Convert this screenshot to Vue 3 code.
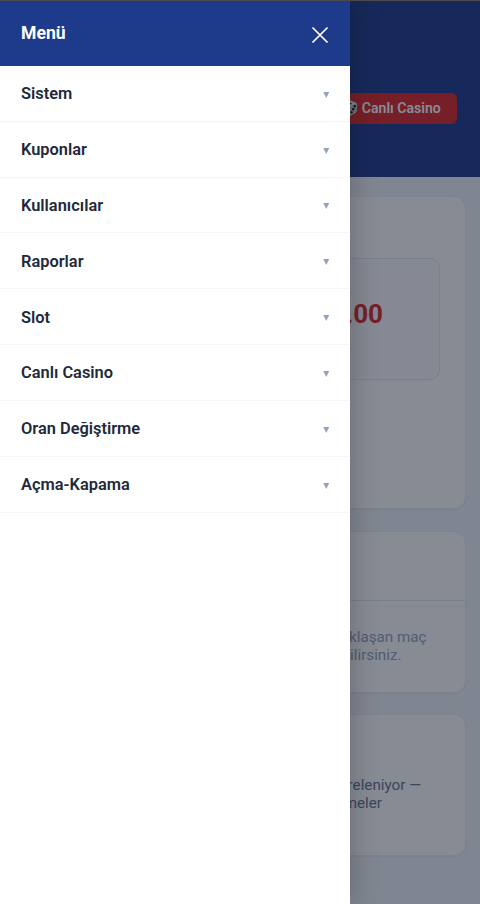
<script setup>
const items = ['Sistem', 'Kuponlar', 'Kullanıcılar', 'Raporlar', 'Slot', 'Canlı Casino', 'Oran Değiştirme', 'Açma-Kapama']
</script>

<template>
  <div class="screen">
    <main class="page">
      <header class="topbar">
        <button class="casino">
          <svg class="die" viewBox="0 0 16 16">
            <path d="M8 .7 14.5 3.6 14 12 8 15.4 2 12 1.5 3.6Z" fill="#eceff1" stroke="#eceff1" stroke-linejoin="round" />
            <path d="M8 6.5 14.5 3.6 14 12 8 15.4Z" fill="#c3cace" />
            <g fill="#101418">
              <ellipse cx="8" cy="3.6" rx="1.7" ry=".9" />
              <ellipse cx="12.8" cy="6.2" rx="1.1" ry="1.4" />
              <ellipse cx="11.2" cy="9.2" rx="1.1" ry="1.4" />
              <ellipse cx="9.6" cy="12.3" rx="1.1" ry="1.4" />
              <circle cx="5" cy="9" r="1" />
            </g>
          </svg>
          <span>Canlı Casino</span>
        </button>
      </header>
      <section class="card balance">
        <div class="amount">.00</div>
      </section>
      <section class="card matches">
        <div class="card-head"></div>
        <div class="lines muted">
          <p>klaşan maç</p>
          <p class="second">ilirsiniz.</p>
        </div>
      </section>
      <section class="card note">
        <div class="lines">
          <p>releniyor —</p>
          <p class="second">meler</p>
        </div>
      </section>
    </main>
    <div class="overlay"></div>
    <aside class="drawer">
      <div class="drawer-head">
        <h2>Menü</h2>
        <button class="close" aria-label="Kapat">
          <svg viewBox="0 0 18 18"><path d="M1.5 1.5 16.5 16.5M16.5 1.5 1.5 16.5" /></svg>
        </button>
      </div>
      <nav>
        <a v-for="item in items" :key="item" class="item">
          <span>{{ item }}</span>
          <svg class="arrow" viewBox="0 0 6 6"><path d="M0 0H6L3 6Z" /></svg>
        </a>
      </nav>
    </aside>
    <div class="edge"></div>
  </div>
</template>

<style>
body { margin: 0; }
</style>

<style scoped>
* { box-sizing: border-box; }
.screen {
  position: relative;
  width: 480px;
  height: 904px;
  overflow: hidden;
  background: #f1f5f9;
  font-family: Roboto, "Liberation Sans", sans-serif;
}
button { border: 0; font: inherit; }
p, h2 { margin: 0; }
.page { display: flex; flex-direction: column; }
.topbar {
  display: flex;
  justify-content: flex-end;
  align-items: flex-start;
  height: 176.6px;
  padding: 93px 23px 0 0;
  background: #1e3a8a;
}
.casino {
  display: flex;
  align-items: center;
  gap: 4px;
  height: 30.5px;
  padding: 0 16.3px;
  border-radius: 6px;
  background: #dc2626;
  color: #fff;
  font-size: 14.05px;
  font-weight: 600;
}
.die { width: 16px; height: 16px; }
.card {
  margin: 0 14px;
  border: 1px solid #e8ecf2;
  border-radius: 12px;
  background: #fff;
  box-shadow: 0 1px 3px rgba(0, 0, 0, .05);
}
.balance { height: 313px; margin-top: 19px; padding: 61px 25px 0; }
.amount {
  display: flex;
  justify-content: flex-end;
  align-items: center;
  height: 122px;
  padding: 0 56px 10px 0;
  border: 1px solid #e2e8f0;
  border-radius: 10px;
  background: #f8fafc;
  color: #dc2626;
  font-size: 26px;
  font-weight: 700;
}
.matches { height: 162px; margin-top: 22px; }
.card-head { height: 69px; border-bottom: 1px solid #e2e8f0; }
.note { height: 141.6px; margin-top: 21.4px; padding-top: 34px; }
.lines {
  padding: 27px 44px 0 0;
  color: #64748b;
  font-size: 15.2px;
  line-height: 18px;
  text-align: right;
}
.muted { padding-right: 38.5px; color: #94a3b8; }
.second { padding-right: 39px; }
.muted .second { padding-right: 25px; }
.overlay { position: absolute; inset: 0; background: rgba(15, 23, 42, .5); }
.drawer {
  position: absolute;
  inset: 0 auto 0 0;
  width: 350.4px;
  background: #fff;
  box-shadow: 4px 0 24px rgba(0, 0, 0, .2);
}
.drawer-head {
  display: flex;
  justify-content: space-between;
  align-items: center;
  height: 66px;
  padding: 0 21px;
  background: #1e3a8a;
  color: #fff;
}
.drawer-head h2 { font-size: 17.6px; font-weight: 700; }
.close { display: flex; padding: 3px 0 0; background: none; }
.close svg { width: 18px; height: 18px; fill: none; stroke: #fff; stroke-width: 1.7; }
.item {
  display: flex;
  justify-content: space-between;
  align-items: center;
  height: 55.83px;
  padding: .6px 21px 0;
  border-bottom: 1px solid #f4f6f9;
  color: #1e293b;
  font-size: 16.4px;
  font-weight: 600;
}
.arrow { width: 6.5px; height: 6px; margin-top: 2px; fill: #94a3b8; }
.edge { position: absolute; inset: 0 0 auto; height: 1px; background: #4b4b4d; }
</style>
